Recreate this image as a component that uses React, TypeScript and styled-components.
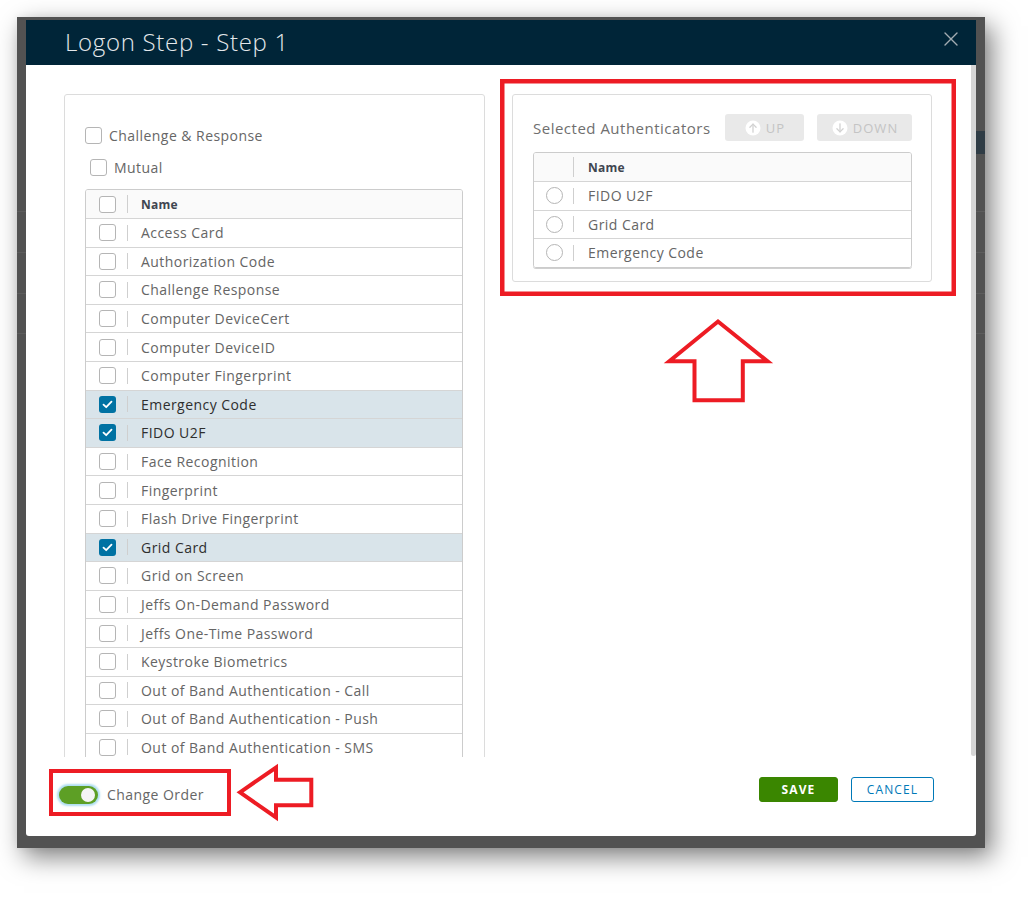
import React from 'react';
import styled, { createGlobalStyle } from 'styled-components';

const FONT = `"Open Sans", "Liberation Sans", Arial, sans-serif`;

const Global = createGlobalStyle`
  html, body { margin: 0; padding: 0; background: #fff; }
  body { font-family: ${FONT}; width: 1033px; height: 897px; overflow: hidden; }
  * { box-sizing: border-box; }
`;

const Page = styled.div`
  position: relative;
  width: 1033px;
  height: 897px;
  padding: 17px 0 0 17px;
`;

const Frame = styled.div`
  width: 968px;
  height: 831px;
  background-color: #525252;
  background-image:
    linear-gradient(#5d5d5d, #5d5d5d),
    linear-gradient(#5d5d5d, #5d5d5d),
    linear-gradient(#5d5d5d, #5d5d5d),
    linear-gradient(#5d5d5d, #5d5d5d),
    linear-gradient(#2f3c45, #2f3c45);
  background-size: 100% 1px, 100% 1px, 100% 1px, 100% 1px, 12px 23px;
  background-position: 0 194px, 0 235px, 0 276px, 0 316px, right 0 top 114px;
  background-repeat: no-repeat;
  padding: 3px 9px 12px 9px;
  box-shadow: 7px 9px 24px rgba(0, 0, 0, 0.5), 0 0 8px rgba(0, 0, 0, 0.06);
`;

const Modal = styled.div`
  width: 950px;
  height: 816px;
  background: #fff;
  display: flex;
  flex-direction: column;
  border-radius: 0 0 3px 3px;
  overflow: hidden;
`;

const Header = styled.header`
  height: 45px;
  flex: 0 0 45px;
  background: #002538;
  display: flex;
  align-items: center;
  justify-content: space-between;
  padding: 0 17px 0 39px;
`;

const Title = styled.h1`
  margin: 0 0 3px 0;
  font-family: ${FONT};
  font-size: 24px;
  font-weight: 300;
  color: #e4e8eb;
  letter-spacing: 0.7px;
`;

const CloseBtn = styled.button`
  width: 16px;
  height: 16px;
  padding: 0;
  border: 0;
  background: transparent;
  display: flex;
  align-items: center;
  justify-content: center;
  margin-bottom: 7px;
`;

const Body = styled.div`
  height: 692px;
  flex: 0 0 692px;
  display: flex;
  overflow: hidden;
`;

const Content = styled.div`
  flex: 1;
  display: grid;
  grid-template-columns: 421px 420px;
  column-gap: 27px;
  padding: 29px 0 0 38px;
  align-items: start;
`;

const ScrollBar = styled.div`
  width: 5px;
  flex: 0 0 5px;
  background: #d6d6d6;
  border-radius: 0 0 3px 3px;
  margin-bottom: 1px;
`;

const Card = styled.section<{ $pad: string }>`
  border: 1px solid #dcdcdc;
  border-radius: 3px;
  padding: ${(p) => p.$pad};
  background: #fff;
`;

const OptionLine = styled.label<{ $indent?: number; $top?: number }>`
  display: flex;
  align-items: center;
  gap: 7px;
  height: 17px;
  margin-left: ${(p) => p.$indent ?? 0}px;
  margin-top: ${(p) => p.$top ?? 0}px;
  font-size: 14px;
  letter-spacing: 0.45px;
  color: #666;
`;

const Box = styled.span<{ $checked?: boolean }>`
  width: 17px;
  height: 17px;
  flex: 0 0 17px;
  border-radius: 3px;
  border: ${(p) => (p.$checked ? '0' : '1px solid #b5b5b5')};
  background: ${(p) => (p.$checked ? '#0072a3' : '#fff')};
  display: inline-flex;
  align-items: center;
  justify-content: center;
`;

const Table = styled.div<{ $top: number; $shadow?: boolean }>`
  margin-top: ${(p) => p.$top}px;
  border: 1px solid #cccccc;
  border-radius: 3px;
  overflow: hidden;
  box-shadow: ${(p) => (p.$shadow ? '0 1px 0 #d0d0d0' : 'none')};
`;

const HeadRow = styled.div`
  height: 28px;
  display: flex;
  align-items: center;
  background: #fafafa;
`;

const Row = styled.div<{ $h: number; $selected?: boolean }>`
  height: ${(p) => p.$h}px;
  display: flex;
  align-items: center;
  border-top: 1px solid #d5d5d5;
  background: ${(p) => (p.$selected ? '#d9e4ea' : '#fff')};
  color: ${(p) => (p.$selected ? '#2e2e2e' : '#656565')};
`;

const Lead = styled.span<{ $w: number; $pl: number }>`
  width: ${(p) => p.$w}px;
  flex: 0 0 ${(p) => p.$w}px;
  padding-left: ${(p) => p.$pl}px;
  display: flex;
  align-items: center;
`;

const Sep = styled.span<{ $h: number }>`
  width: 1px;
  height: ${(p) => p.$h}px;
  background: #cfcfcf;
  flex: 0 0 1px;
`;

const Cell = styled.span<{ $pl: number }>`
  padding-left: ${(p) => p.$pl}px;
  font-size: 14px;
  letter-spacing: 0.45px;
  white-space: nowrap;
`;

const HeadCell = styled.span<{ $pl: number }>`
  padding-left: ${(p) => p.$pl}px;
  font-size: 12px;
  font-weight: 700;
  letter-spacing: 0.2px;
  color: #3f4650;
`;

const Radio = styled.span`
  width: 17px;
  height: 17px;
  border-radius: 50%;
  border: 1px solid #b5b5b5;
  background: #fff;
`;

const TitleBar = styled.div`
  display: flex;
  align-items: center;
  height: 27px;
`;

const PanelTitle = styled.h2`
  margin: 0;
  flex: 0 0 192px;
  font-size: 15px;
  font-weight: 400;
  letter-spacing: 0.5px;
  color: #6f6f6f;
  white-space: nowrap;
`;

const MoveBtn = styled.button<{ $w: number }>`
  width: ${(p) => p.$w}px;
  height: 27px;
  margin-right: 13px;
  border: 0;
  border-radius: 3px;
  background: #e9e9e9;
  color: #c4c4c4;
  font-family: ${FONT};
  font-size: 13px;
  letter-spacing: 1px;
  display: flex;
  align-items: center;
  justify-content: center;
  gap: 5px;
  padding: 0 0 0 1px;
  &:last-child { margin-right: 0; }
`;

const Footer = styled.footer`
  flex: 1;
  display: flex;
  justify-content: space-between;
  align-items: flex-start;
  padding: 20px 42px 0 33px;
`;

const ToggleWrap = styled.label`
  margin-top: 8px;
  display: flex;
  align-items: center;
  gap: 9px;
  font-size: 14px;
  letter-spacing: 0.45px;
  color: #666;
`;

const Switch = styled.span`
  position: relative;
  width: 39px;
  height: 18px;
  border-radius: 9px;
  background: #5d9f25;
  box-shadow: 0 0 2px 2px rgba(110, 195, 230, 0.55);
  display: flex;
  align-items: center;
  justify-content: flex-end;
  padding-right: 3px;
`;

const Knob = styled.span`
  width: 14px;
  height: 14px;
  border-radius: 50%;
  background: #f4f4f4;
`;

const Actions = styled.div`
  display: flex;
  gap: 13px;
`;

const ActionBtn = styled.button<{ $primary?: boolean; $w: number }>`
  width: ${(p) => p.$w}px;
  height: 25px;
  border-radius: 3px;
  font-family: ${FONT};
  font-size: 12px;
  letter-spacing: 1.1px;
  font-weight: ${(p) => (p.$primary ? 700 : 500)};
  border: 1px solid ${(p) => (p.$primary ? '#3a8600' : '#0079b8')};
  background: ${(p) => (p.$primary ? '#3a8600' : '#fff')};
  color: ${(p) => (p.$primary ? '#fff' : '#0079b8')};
  padding: 0;
`;

const Overlay = styled.svg`
  position: absolute;
  left: 0;
  top: 0;
  pointer-events: none;
`;

const Check = () => (
  <svg width="11" height="9" viewBox="0 0 11 9">
    <path d="M1.5 4.6 L4.2 7.2 L9.5 1.6" fill="none" stroke="#fff" strokeWidth="1.8" strokeLinecap="round" strokeLinejoin="round" />
  </svg>
);

const CircleArrow = ({ down }: { down?: boolean }) => (
  <svg width="16" height="16" viewBox="0 0 16 16">
    <circle cx="8" cy="8" r="7.5" fill="#fff" />
    <g transform={down ? 'rotate(180 8 8)' : undefined} fill="none" stroke="#d2d2d2" strokeWidth="1.3" strokeLinecap="round" strokeLinejoin="round">
      <path d="M8 12.2 V4.2" />
      <path d="M4.9 7.2 L8 4.1 L11.1 7.2" />
    </g>
  </svg>
);

const items: { name: string; checked?: boolean }[] = [
  { name: 'Access Card' },
  { name: 'Authorization Code' },
  { name: 'Challenge Response' },
  { name: 'Computer DeviceCert' },
  { name: 'Computer DeviceID' },
  { name: 'Computer Fingerprint' },
  { name: 'Emergency Code', checked: true },
  { name: 'FIDO U2F', checked: true },
  { name: 'Face Recognition' },
  { name: 'Fingerprint' },
  { name: 'Flash Drive Fingerprint' },
  { name: 'Grid Card', checked: true },
  { name: 'Grid on Screen' },
  { name: 'Jeffs On-Demand Password' },
  { name: 'Jeffs One-Time Password' },
  { name: 'Keystroke Biometrics' },
  { name: 'Out of Band Authentication - Call' },
  { name: 'Out of Band Authentication - Push' },
  { name: 'Out of Band Authentication - SMS' },
];

const selected = ['FIDO U2F', 'Grid Card', 'Emergency Code'];

export default function App() {
  return (
    <>
      <Global />
      <Page>
        <Frame>
          <Modal>
            <Header>
              <Title>Logon Step - Step 1</Title>
              <CloseBtn aria-label="Close">
                <svg width="14" height="14" viewBox="0 0 14 14">
                  <path d="M1 1 L13 13 M13 1 L1 13" stroke="#a3acb2" strokeWidth="1.4" strokeLinecap="round" />
                </svg>
              </CloseBtn>
            </Header>
            <Body>
              <Content>
                <Card $pad="32px 21px 40px 20px">
                  <OptionLine>
                    <Box />
                    Challenge &amp; Response
                  </OptionLine>
                  <OptionLine $indent={5} $top={15}>
                    <Box />
                    Mutual
                  </OptionLine>
                  <Table $top={13}>
                    <HeadRow>
                      <Lead $w={41} $pl={13}>
                        <Box />
                      </Lead>
                      <Sep $h={18} />
                      <HeadCell $pl={13}>Name</HeadCell>
                    </HeadRow>
                    {items.map((it) => (
                      <Row key={it.name} $h={28.6} $selected={it.checked}>
                        <Lead $w={41} $pl={13}>
                          <Box $checked={it.checked}>{it.checked && <Check />}</Box>
                        </Lead>
                        <Sep $h={16} />
                        <Cell $pl={13}>{it.name}</Cell>
                      </Row>
                    ))}
                  </Table>
                </Card>
                <Card $pad="19px 19px 13px 20px">
                  <TitleBar>
                    <PanelTitle>Selected Authenticators</PanelTitle>
                    <MoveBtn $w={79} disabled>
                      <CircleArrow />
                      UP
                    </MoveBtn>
                    <MoveBtn $w={95} disabled>
                      <CircleArrow down />
                      DOWN
                    </MoveBtn>
                  </TitleBar>
                  <Table $top={11} $shadow>
                    <HeadRow>
                      <Lead $w={39} $pl={12} />
                      <Sep $h={20} />
                      <HeadCell $pl={14}>Name</HeadCell>
                    </HeadRow>
                    {selected.map((s) => (
                      <Row key={s} $h={28.5}>
                        <Lead $w={39} $pl={12}>
                          <Radio />
                        </Lead>
                        <Sep $h={16} />
                        <Cell $pl={14}>{s}</Cell>
                      </Row>
                    ))}
                  </Table>
                </Card>
              </Content>
              <ScrollBar />
            </Body>
            <Footer>
              <ToggleWrap>
                <Switch>
                  <Knob />
                </Switch>
                Change Order
              </ToggleWrap>
              <Actions>
                <ActionBtn $primary $w={79}>SAVE</ActionBtn>
                <ActionBtn $w={83}>CANCEL</ActionBtn>
              </Actions>
            </Footer>
          </Modal>
        </Frame>
        <Overlay width="1033" height="897" viewBox="0 0 1033 897">
          <g fill="none" stroke="#ed1c24">
            <rect x="502.25" y="81.25" width="451.5" height="212.5" strokeWidth="4.5" />
            <rect x="51" y="771" width="178" height="43" strokeWidth="4" />
            <polygon points="718,321.5 767.5,361.3 742.8,361.3 742.8,400.3 694.5,400.3 694.5,361.3 669.3,361.3" strokeWidth="4" strokeLinejoin="miter" />
            <polygon points="240,792.3 276,767.5 276,779.7 311.3,779.7 311.3,805.3 276,805.3 276,817.5" strokeWidth="4" strokeLinejoin="miter" />
          </g>
        </Overlay>
      </Page>
    </>
  );
}
